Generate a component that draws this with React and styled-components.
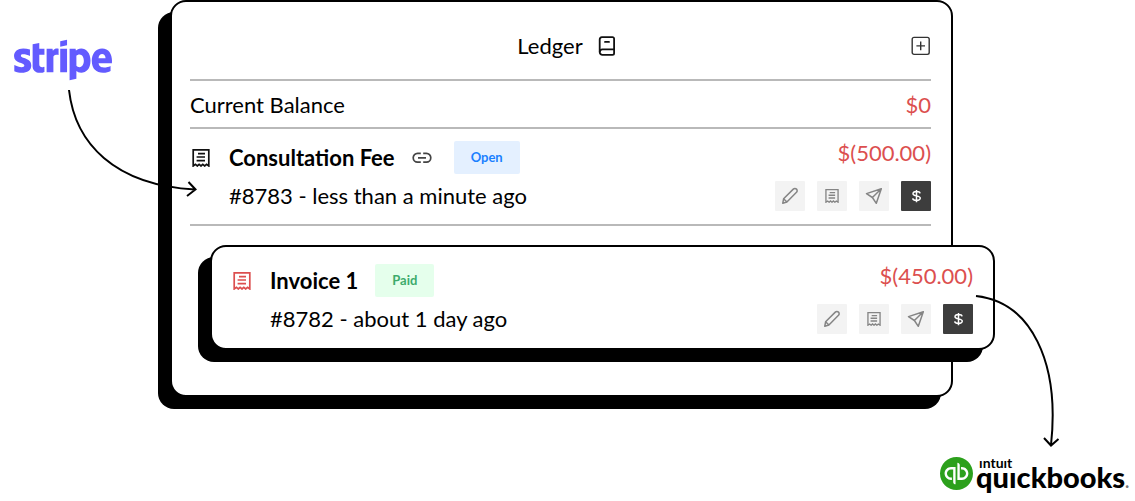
import React from 'react'
import styled, { createGlobalStyle } from 'styled-components'
import { FaStripe } from 'react-icons/fa'
import { SiQuickbooks } from 'react-icons/si'

const GlobalStyle = createGlobalStyle`
*{
  box-sizing:border-box;
}
body{
  margin:0;
  background-color:white;
  color:black;
  font-family:Lato, "Open Sans", sans-serif;
}
`

const Page = styled.main`
position:relative;
display:grid;
grid-template-columns:170px minmax(0, 1fr) 182px;
row-gap:60px;
padding-bottom:11px;
`

const StripeLogo = styled.div`
display:flex;
align-items:flex-start;
padding:11px 0 0 14px;
color:#635bff;
svg{
  display:block;
  width:98px;
  height:98px;
}
`

const Card = styled.section`
background-color:white;
border:2px solid black;
border-radius:16px;
box-shadow:-12px 12px 0 black;
`

const Ledger = styled(Card)`
padding:0 20px 45px 18px;
`

const Header = styled.header`
display:grid;
grid-template-columns:1fr auto 1fr;
align-items:center;
height:79px;
padding-top:10px;
border-bottom:2px solid #b9b9b9;
`

const Title = styled.h1`
grid-column:2;
display:flex;
align-items:center;
gap:15px;
margin:0;
padding-left:12px;
font-size:22px;
line-height:30px;
font-weight:400;
`

const IconButton = styled.button`
justify-self:end;
display:flex;
padding:0;
border:none;
background:none;
color:#333;
cursor:pointer;
`

const Balance = styled.div`
display:flex;
align-items:center;
justify-content:space-between;
height:48px;
padding-top:2px;
border-bottom:2px solid #b9b9b9;
font-size:22px;
line-height:30px;
`

const Amount = styled.span`
color:#dc4f4f;
font-size:22px;
line-height:24px;
`

const Entry = styled.article`
display:flex;
justify-content:space-between;
padding:12px 0 13px;
`

const LedgerEntry = styled(Entry)`
border-bottom:2px solid #b9b9b9;
`

const Invoice = styled(Card)`
margin:19px -64px 0 20px;
padding:5px 20px 1px 19px;
`

const Info = styled.div`
display:grid;
grid-template-columns:39px auto;
row-gap:7px;
`

const EntryIcon = styled.span`
display:flex;
align-items:center;
padding-left:2px;
color:${({ $paid }) => ($paid ? '#dc4f4f' : '#111')};
`

const Name = styled.div`
display:flex;
align-items:center;
gap:17px;
height:33px;
`

const EntryTitle = styled.h2`
margin:0;
font-size:22px;
line-height:30px;
font-weight:700;
`

const LinkAnchor = styled.a`
display:flex;
margin-right:5px;
color:#444;
`

const Badge = styled.span`
padding:0 17px;
border-radius:2px;
font-size:13px;
line-height:33px;
font-weight:700;
color:${({ $paid }) => ($paid ? '#3dab6b' : '#1a80ff')};
background-color:${({ $paid }) => ($paid ? '#e5ffec' : '#e4f0ff')};
`

const Meta = styled.p`
grid-column:2;
margin:0;
font-size:22px;
line-height:30px;
`

const Side = styled.div`
display:flex;
flex-direction:column;
align-items:flex-end;
justify-content:space-between;
`

const Actions = styled.div`
display:flex;
gap:12px;
`

const Action = styled.button`
display:flex;
align-items:center;
justify-content:center;
width:30px;
height:30px;
padding:0;
border:none;
border-radius:1px;
cursor:pointer;
color:${({ $dark }) => ($dark ? 'white' : '#858585')};
background-color:${({ $dark }) => ($dark ? '#3d3d3d' : '#f3f3f3')};
`

const QuickbooksLogo = styled.div`
grid-column:1 / -1;
justify-self:end;
display:flex;
gap:3px;
padding-right:6px;
> svg{
  width:33px;
  height:33px;
  color:#2ca01c;
}
`

const Wordmark = styled.div`
font-family:Lato, sans-serif;
`

const Intuit = styled.div`
padding-left:3px;
font-size:14px;
line-height:12px;
font-weight:700;
`

const Quickbooks = styled.div`
font-size:29px;
line-height:16px;
font-weight:900;
small{
  color:#777;
  font-size:16px;
}
`

/* the arrows run across the cards, from one logo to the other */
const ArrowIn = styled.svg`
position:absolute;
left:60px;
top:84px;
`

const ArrowOut = styled.svg`
position:absolute;
right:70px;
top:290px;
`

const ReceiptIcon = ({ size = 18 }) => (
  <svg width={size} height={size} viewBox="0 0 18 18" fill="none" stroke="currentColor" strokeWidth="1.7">
    <path d="M1.2 17V.9h15.6V17l-2.2-1.6-1.9 1.6-1.9-1.6L9 17l-1.9-1.6L5.3 17l-1.9-1.6z" />
    <path d="M6 4.6h7M4.6 8h8.4M4.6 11.6h8.4" />
  </svg>
)

const BookIcon = () => (
  <svg width="18" height="20" viewBox="0 0 18 20" fill="none" stroke="#111" strokeWidth="1.8" strokeLinejoin="round" strokeLinecap="round">
    <path d="M4 1.2h10.500a1.6 1.6 0 0 1 1.6 1.6v14.4a1.6 1.6 0 0 1-1.6 1.6H4.4a2.7 2.7 0 0 1-2.7-2.7V3.6A2.4 2.4 0 0 1 4 1.2z" />
    <path d="M1.8 15.8a2.6 2.6 0 0 1 2.6-2.4H16M7 5.9h4" />
  </svg>
)

const PlusIcon = () => (
  <svg width="20" height="20" viewBox="0 0 20 20" fill="none" stroke="currentColor" strokeWidth="1.4">
    <rect x="1.2" y="1.4" width="17" height="17" rx="1.8" />
    <path d="M9.7 5.6v8.6M5.4 9.9h8.6" />
  </svg>
)

const LinkIcon = () => (
  <svg width="20" height="12" viewBox="0 0 20 12" fill="none" stroke="currentColor" strokeWidth="1.7">
    <path d="M8.8 1.4H5.6a4.4 4.4 0 0 0 0 8.8h3.2M11.2 1.4h3.2a4.4 4.4 0 0 1 0 8.8h-3.2M6 5.8h8" />
  </svg>
)

const PencilIcon = () => (
  <svg width="18" height="18" viewBox="0 0 18 18" fill="none" stroke="currentColor" strokeWidth="1.5" strokeLinejoin="round">
    <path d="M1.8 16.2l.8-4.4L12.3 2.1a2.2 2.2 0 0 1 3.2 3.2L5.9 15z" />
    <path d="M2.6 11.8L5.9 15" />
  </svg>
)

const SendIcon = () => (
  <svg width="18" height="18" viewBox="0 0 18 18" fill="none" stroke="currentColor" strokeWidth="1.5" strokeLinejoin="round">
    <path d="M16.3 1.8L1.5 6.6l5.9 3.9 3.9 5.8zM16.3 1.8L7.4 10.5" />
  </svg>
)

const DollarIcon = () => (
  <svg width="11" height="14" viewBox="0 0 12 16" fill="none" stroke="currentColor" strokeWidth="1.7">
    <path d="M6 1v14M10.1 4.9C9.8 3.5 8.2 2.9 6 2.9S2 3.7 2 5.4C2 8.8 10.3 6.9 10.3 10.4c0 1.8-1.9 2.7-4.3 2.7S1.9 12.3 1.6 10.7" />
  </svg>
)

const EntryBody = ({ item }) => {

  const { title, meta, amount, status, link } = item;
  const paid = status === 'Paid';

  return (
    <>
      <Info>
        <EntryIcon $paid={paid}><ReceiptIcon /></EntryIcon>
        <Name>
          <EntryTitle>{title}</EntryTitle>
          {
            link && <LinkAnchor href={link} aria-label="Link"><LinkIcon /></LinkAnchor>
          }
          <Badge $paid={paid}>{status}</Badge>
        </Name>
        <Meta>{meta}</Meta>
      </Info>
      <Side>
        <Amount>{amount}</Amount>
        <Actions>
          <Action aria-label="Edit"><PencilIcon /></Action>
          <Action aria-label="Receipt"><ReceiptIcon size={14} /></Action>
          <Action aria-label="Send"><SendIcon /></Action>
          <Action $dark aria-label="Pay"><DollarIcon /></Action>
        </Actions>
      </Side>
    </>
  )
}

const fee = {
  title: 'Consultation Fee',
  meta: '#8783 - less than a minute ago',
  amount: '$(500.00)',
  status: 'Open',
  link: '#8783',
}

const invoice = {
  title: 'Invoice 1',
  meta: '#8782 - about 1 day ago',
  amount: '$(450.00)',
  status: 'Paid',
}

const App = () => {
  return (
    <>
      <GlobalStyle />
      <Page>
        <StripeLogo><FaStripe aria-label="stripe" /></StripeLogo>
        <Ledger>
          <Header>
            <Title>Ledger <BookIcon /></Title>
            <IconButton aria-label="Add"><PlusIcon /></IconButton>
          </Header>
          <Balance>
            <span>Current Balance</span>
            <Amount>$0</Amount>
          </Balance>
          <LedgerEntry><EntryBody item={fee} /></LedgerEntry>
          <Invoice>
            <Entry><EntryBody item={invoice} /></Entry>
          </Invoice>
        </Ledger>
        <QuickbooksLogo>
          <SiQuickbooks />
          <Wordmark>
            <Intuit>ıntuıt</Intuit>
            <Quickbooks>quıckbooks<small>.</small></Quickbooks>
          </Wordmark>
        </QuickbooksLogo>
        <ArrowIn width="140" height="116" viewBox="60 84 140 116" fill="none" stroke="black" strokeWidth="2">
          <path d="M69 90C75 143 114 185 195 189.5M188.5 182L195.5 189.5L187 196" />
        </ArrowIn>
        <ArrowOut width="95" height="162" viewBox="970 290 95 162" fill="none" stroke="black" strokeWidth="2">
          <path d="M976 296C1031 302 1060 362 1051 445M1044 438L1051 445.5L1058.5 439" />
        </ArrowOut>
      </Page>
    </>
  )
}

export default App
